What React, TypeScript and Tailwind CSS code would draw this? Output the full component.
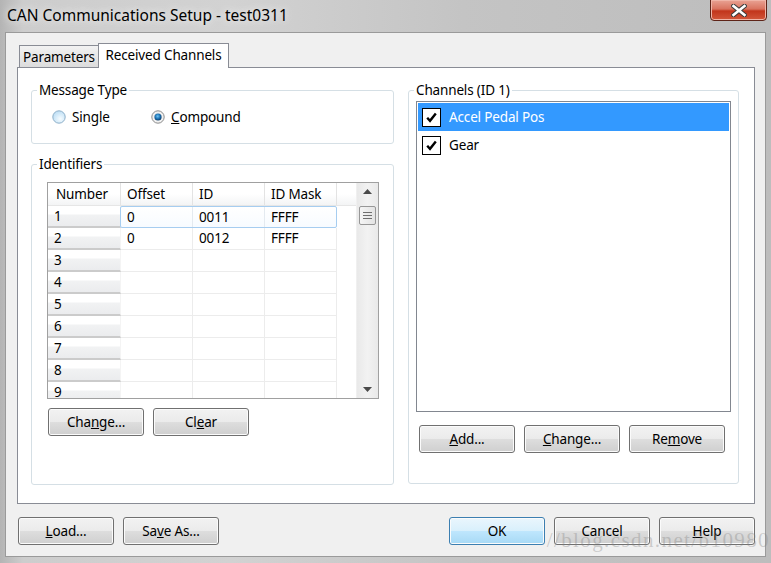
import React from "react";

const btnBase =
  "h-[28px] flex items-center justify-center rounded-[3px] border text-black shadow-[inset_0_0_0_1px_#fbfbfb]";
const btnGray =
  "border-[#707070] bg-[linear-gradient(to_bottom,#f2f2f2_0%,#ebebeb_48%,#dddddd_52%,#cfcfcf_100%)]";
const btnBlue =
  "border-[#3c7fb1] bg-[linear-gradient(to_bottom,#eaf6fd_0%,#d9f0fc_48%,#bee6fd_52%,#a7d9f5_100%)] shadow-[inset_0_0_0_1px_#9ddcfb]";

function Btn({ children, className = "", primary = false }: { children: React.ReactNode; className?: string; primary?: boolean }) {
  return <div className={`${btnBase} ${primary ? btnBlue : btnGray} ${className}`}>{children}</div>;
}

function RadioOff() {
  return (
    <svg width="14" height="14" viewBox="0 0 14 14">
      <defs>
        <radialGradient id="ro" cx="0.6" cy="0.65" r="0.7">
          <stop offset="0" stopColor="#f6fcff" />
          <stop offset="1" stopColor="#b9dcf4" />
        </radialGradient>
      </defs>
      <circle cx="7" cy="7" r="6.2" fill="url(#ro)" stroke="#8fb0c9" strokeWidth="1" />
    </svg>
  );
}

function RadioOn() {
  return (
    <svg width="14" height="14" viewBox="0 0 14 14">
      <defs>
        <radialGradient id="rd" cx="0.45" cy="0.4" r="0.6">
          <stop offset="0" stopColor="#6cc3f5" />
          <stop offset="0.6" stopColor="#1a6fb0" />
          <stop offset="1" stopColor="#0d3a66" />
        </radialGradient>
      </defs>
      <circle cx="7" cy="7" r="6.2" fill="#f1f1f1" stroke="#8c8c8c" strokeWidth="1" />
      <circle cx="7" cy="7" r="3.6" fill="url(#rd)" />
    </svg>
  );
}

function Check() {
  return (
    <div className="w-[19px] h-[19px] border border-black bg-white flex items-center justify-center">
      <svg width="13" height="13" viewBox="0 0 13 13">
        <path d="M2.2 6.8 L5 9.8 L10.8 2.6" fill="none" stroke="#000" strokeWidth="2.4" strokeLinejoin="miter" />
      </svg>
    </div>
  );
}

const numCell =
  "w-[73px] shrink-0 h-full pl-[6px] flex items-center border-r border-[#f4f4f4] border-b-2 border-b-[#cbcbcb] bg-[linear-gradient(to_bottom,#ffffff_0%,#ffffff_40%,#f1f2f3_45%,#ebecee_100%)]";
const dataCell = "w-[72px] shrink-0 h-full pl-[6px] flex items-center border-r border-[#ececec]";

const rows = [
  ["1", "0", "0011", "FFFF"],
  ["2", "0", "0012", "FFFF"],
  ["3", "", "", ""],
  ["4", "", "", ""],
  ["5", "", "", ""],
  ["6", "", "", ""],
  ["7", "", "", ""],
  ["8", "", "", ""],
  ["9", "", "", ""],
];

function Table() {
  return (
    <div className="w-[332px] h-[217px] border border-[#a0a0a0] flex bg-white">
      <div className="w-[308px] overflow-hidden flex flex-col">
        <div className="h-[23px] shrink-0 flex border-b border-[#e6e6e6] bg-[linear-gradient(to_bottom,#ffffff_0%,#ffffff_50%,#f3f4f5_100%)]">
          <div className="w-[73px] pl-[8px] flex items-center border-r border-[#e3e3e3]">Number</div>
          <div className="w-[72px] pl-[6px] flex items-center border-r border-[#e3e3e3]">Offset</div>
          <div className="w-[72px] pl-[6px] flex items-center border-r border-[#e3e3e3]">ID</div>
          <div className="w-[72px] pl-[6px] flex items-center border-r border-[#e3e3e3]">ID Mask</div>
        </div>
        {rows.map((r, i) => (
          <div key={i} className="h-[22px] shrink-0 flex">
            <div className={numCell}>{r[0]}</div>
            {i === 0 ? (
              <div className="flex h-full border border-[#a6cdf0] rounded-[2px] bg-[linear-gradient(to_bottom,#ffffff,#f7fbff)] -ml-px">
                <div className="w-[72px] pl-[6px] flex items-center border-r border-[#e4eaf0]">{r[1]}</div>
                <div className="w-[72px] pl-[6px] flex items-center border-r border-[#e4eaf0]">{r[2]}</div>
                <div className="w-[71px] pl-[6px] flex items-center">{r[3]}</div>
              </div>
            ) : (
              <div className="flex h-full border-b border-[#ececec]">
                <div className={dataCell}>{r[1]}</div>
                <div className={dataCell}>{r[2]}</div>
                <div className={dataCell}>{r[3]}</div>
              </div>
            )}
          </div>
        ))}
      </div>
      <div className="w-[22px] h-full flex flex-col items-center bg-[linear-gradient(to_right,#e9e9e9,#f2f2f2_50%,#e9e9e9)] border-l border-[#f0f0f0]">
        <div className="h-[17px] flex items-center justify-center">
          <svg width="9" height="5" viewBox="0 0 9 5">
            <path d="M0 5 L4.5 0 L9 5 Z" fill="#4a4a4a" />
          </svg>
        </div>
        <div className="mt-[6px] w-[17px] h-[19px] rounded-[2px] border border-[#979797] bg-[linear-gradient(to_right,#f5f5f5,#e3e3e3)] flex flex-col items-center justify-center gap-[2px]">
          <div className="w-[9px] h-px bg-[#6f6f6f]" />
          <div className="w-[9px] h-px bg-[#6f6f6f]" />
          <div className="w-[9px] h-px bg-[#6f6f6f]" />
        </div>
        <div className="flex-1" />
        <div className="h-[17px] flex items-center justify-center">
          <svg width="9" height="5" viewBox="0 0 9 5">
            <path d="M0 0 L9 0 L4.5 5 Z" fill="#4a4a4a" />
          </svg>
        </div>
      </div>
    </div>
  );
}

export default function App() {
  return (
    <div className="w-[771px] h-[563px] relative overflow-hidden font-['Noto_Sans',sans-serif] text-[13.5px] tracking-[-0.15px] text-black bg-[linear-gradient(to_right,#b4b4b4_0%,#cdcdcd_3%,#d2d2d2_30%,#c4c4c4_60%,#bdbdbd_100%)]">
      {/* title bar */}
      <div className="h-[32px] flex items-start">
        <div className="pl-[7px] pt-[5px] text-[15.5px] tracking-normal leading-[20px] text-black [text-shadow:0_0_6px_#ececec,0_0_10px_#e4e4e4]">
          CAN Communications Setup - test0311
        </div>
        <div className="ml-auto mr-[4px] -mt-px w-[57px] h-[22px] rounded-b-[4px] border border-[#5e2418] bg-[linear-gradient(to_bottom,#e9a394_0%,#d9735f_45%,#c2351b_55%,#d2573b_100%)] shadow-[inset_0_0_0_1px_#f0b5a8] flex items-center justify-center">
          <svg width="16" height="13" viewBox="0 0 16 13">
            <path d="M2.5 2 L13.5 11 M13.5 2 L2.5 11" stroke="#3b3b3b" strokeWidth="4.6" strokeLinecap="square" />
            <path d="M2.5 2 L13.5 11 M13.5 2 L2.5 11" stroke="#ffffff" strokeWidth="2.6" strokeLinecap="square" />
          </svg>
        </div>
      </div>

      {/* client area */}
      <div className="mx-[5px] h-[525px] border border-[#9a9a9a] bg-[#f0f0f0] flex flex-col pl-[11px] pr-[10px] pt-[10px]">
        {/* tabs */}
        <div className="h-[24px] flex items-end pl-[2px]">
          <div className="h-[22px] w-[79px] border border-r-0 border-b-0 border-[#898c95] bg-[linear-gradient(to_bottom,#f2f2f2,#dcdcdc)] flex items-center justify-center pt-[2px]">
            Parameters
          </div>
          <div className="relative z-10 -mb-px h-[25px] w-[131px] border border-b-0 border-[#898c95] bg-white flex items-center justify-center pb-[2px]">
            Received Channels
          </div>
        </div>

        {/* panel */}
        <div className="h-[437px] border border-[#898c95] bg-white flex gap-[14px] pl-[13px] pt-[14px]">
          {/* left column */}
          <div className="w-[363px] flex flex-col">
            <fieldset className="h-[62px] border border-[#d5dfe5] rounded-[3px]">
              <legend className="ml-[5px] px-[2px] leading-[16px]">Message Type</legend>
              <div className="pl-[20px] pt-[11px] flex items-center h-[27px]">
                <div className="w-[99px] flex items-center gap-[6px]">
                  <RadioOff />
                  <span>
                    Sin<span className="underline">g</span>le
                  </span>
                </div>
                <div className="flex items-center gap-[6px]">
                  <RadioOn />
                  <span>
                    <span className="underline">C</span>ompound
                  </span>
                </div>
              </div>
            </fieldset>

            <fieldset className="mt-[12px] h-[329px] border border-[#d5dfe5] rounded-[3px]">
              <legend className="ml-[5px] px-[2px] leading-[16px]">Identifiers</legend>
              <div className="pl-[15px] pt-[10px]">
                <Table />
                <div className="mt-[9px] ml-px flex gap-[9px]">
                  <Btn className="w-[96px]">
                    Cha<span className="underline">n</span>ge...
                  </Btn>
                  <Btn className="w-[96px]">
                    Cl<span className="underline">e</span>ar
                  </Btn>
                </div>
              </div>
            </fieldset>
          </div>

          {/* right column */}
          <fieldset className="w-[331px] h-[402px] border border-[#d5dfe5] rounded-[3px]">
            <legend className="ml-[5px] px-[2px] leading-[16px]">Channels (ID 1)</legend>
            <div className="pl-[7px] pt-[3px]">
              <div className="w-[315px] h-[311px] border border-[#828790] bg-white p-px">
                <div className="h-[28px] bg-[#3399ff] text-white flex items-center pl-[4px] gap-[8px]">
                  <Check />
                  <span>Accel Pedal Pos</span>
                </div>
                <div className="h-[28px] flex items-center pl-[4px] gap-[8px]">
                  <Check />
                  <span>Gear</span>
                </div>
              </div>
              <div className="mt-[13px] ml-[3px] flex gap-[9px]">
                <Btn className="w-[96px]">
                  <span className="underline">A</span>dd...
                </Btn>
                <Btn className="w-[96px]">
                  <span className="underline">C</span>hange...
                </Btn>
                <Btn className="w-[96px]">
                  Re<span className="underline">m</span>ove
                </Btn>
              </div>
            </div>
          </fieldset>
        </div>

        {/* bottom buttons */}
        <div className="mt-[13px] ml-px flex gap-[9px]">
          <Btn className="w-[96px]">
            <span className="underline">L</span>oad...
          </Btn>
          <Btn className="w-[96px]">
            Sa<span className="underline">v</span>e As...
          </Btn>
          <Btn primary className="w-[96px] ml-auto">
            OK
          </Btn>
          <Btn className="w-[96px]">Cancel</Btn>
          <Btn className="w-[96px]">
            <span className="underline">H</span>elp
          </Btn>
        </div>
      </div>

      {/* watermark */}
      <div className="absolute right-[1px] bottom-[7px] font-['Liberation_Serif',serif] text-[21px] tracking-[1.4px] text-[rgba(130,130,130,0.35)] pointer-events-none">
        //blog.csdn.net/b10980
      </div>
    </div>
  );
}
